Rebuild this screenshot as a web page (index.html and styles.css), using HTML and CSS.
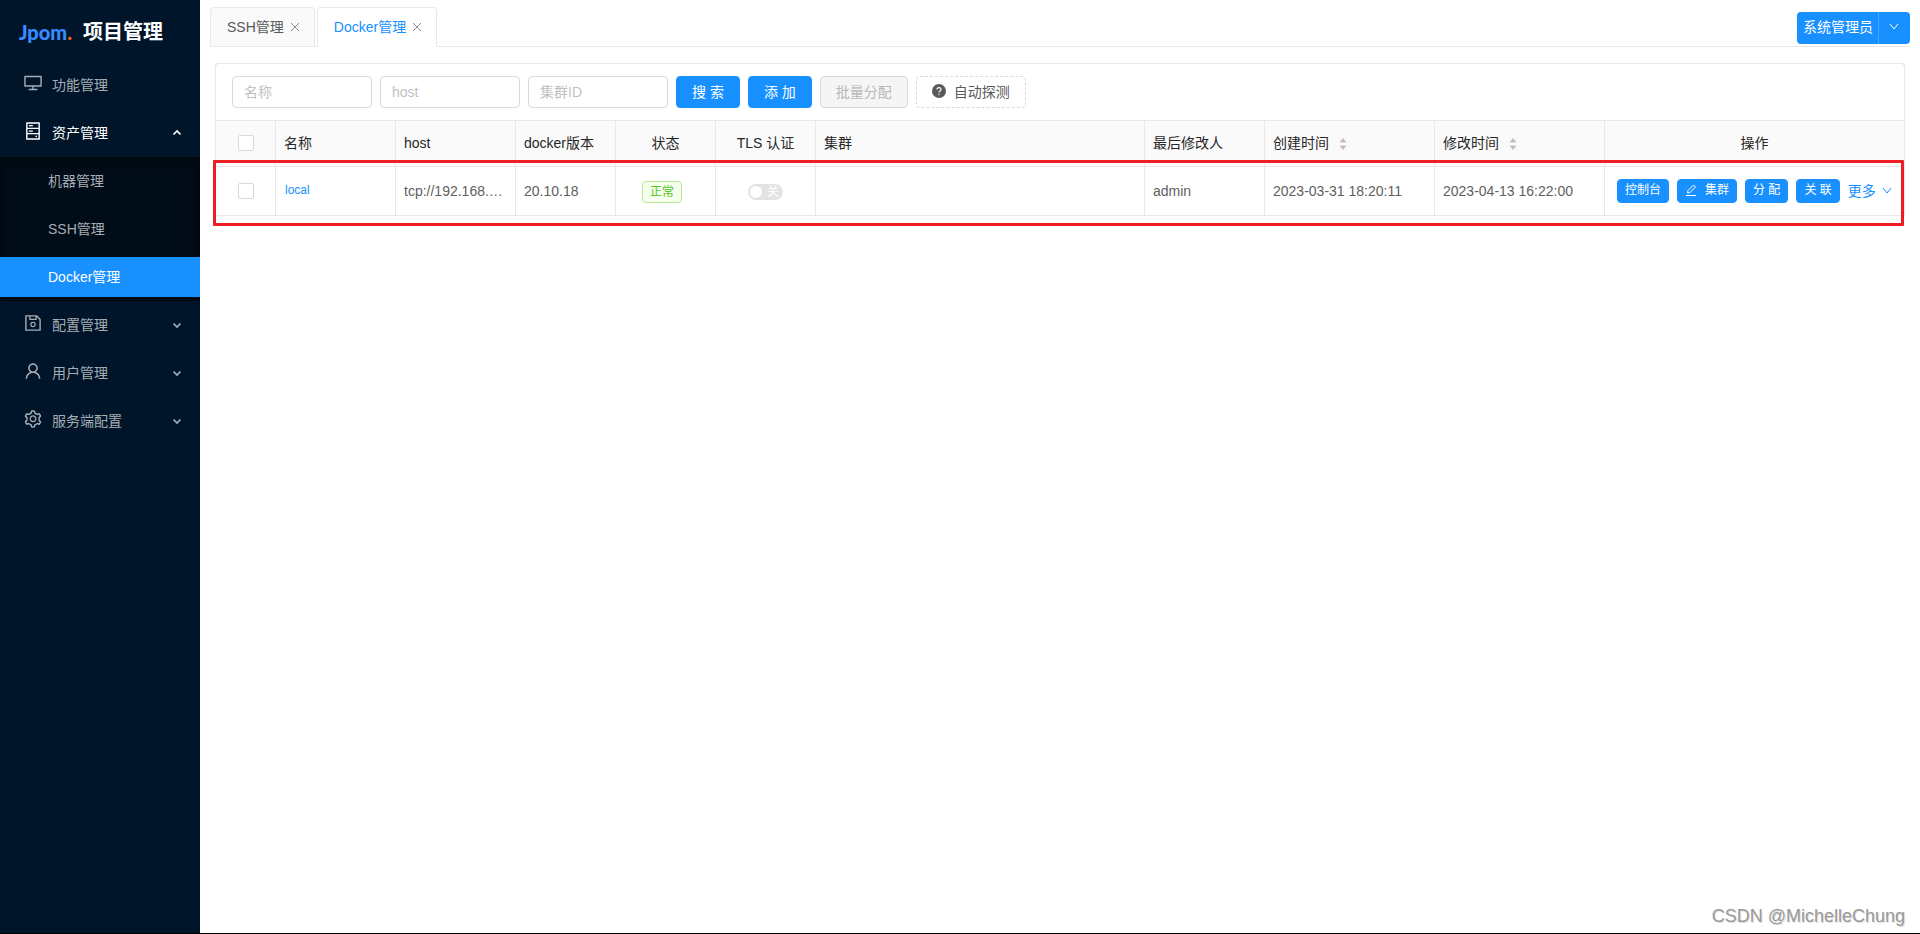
FILE: index.html
```html
<!DOCTYPE html>
<html lang="zh-CN">
<head>
<meta charset="utf-8">
<title>Jpom 项目管理</title>
<link rel="stylesheet" href="styles.css">
</head>
<body>
<svg class="sprite" aria-hidden="true">
  <symbol id="desktop" viewBox="0 0 1024 1024"><path d="M928 140H96c-17.700 0-32 14.300-32 32v496c0 17.700 14.300 32 32 32h380v112H304c-8.800 0-16 7.200-16 16v48c0 4.400 3.600 8 8 8h432c4.400 0 8-3.600 8-8v-48c0-8.800-7.200-16-16-16H548V700h380c17.700 0 32-14.300 32-32V172c0-17.700-14.300-32-32-32zm-40 488H136V212h752v416z"/></symbol>
  <symbol id="hdd" viewBox="0 0 1024 1024"><path d="M832 64H192c-17.700 0-32 14.300-32 32v832c0 17.700 14.300 32 32 32h640c17.700 0 32-14.300 32-32V96c0-17.700-14.300-32-32-32zm-600 72h560v208H232V136zm560 480H232V408h560v208zm0 272H232V680h560v208zM304 208h200v64H304zM304 480h200v64H304zM640 788a40 40 0 1 0 80 0 40 40 0 1 0-80 0z"/></symbol>
  <symbol id="save" viewBox="0 0 1024 1024"><path d="M893.300 293.300L730.700 130.700c-12-12-28.200-18.700-45.200-18.700H144c-17.700 0-32 14.300-32 32v736c0 17.700 14.300 32 32 32h736c17.700 0 32-14.300 32-32V338.500c0-17-6.700-33.200-18.700-45.200zM384 184h256v104H384V184zm456 656H184V184h136v136c0 17.700 14.300 32 32 32h320c17.700 0 32-14.300 32-32V205.800l136 136V840zM512 442c-79.500 0-144 64.500-144 144s64.500 144 144 144 144-64.500 144-144-64.500-144-144-144zm0 224c-44.200 0-80-35.800-80-80s35.800-80 80-80 80 35.800 80 80-35.800 80-80 80z"/></symbol>
  <symbol id="user" viewBox="0 0 1024 1024"><path d="M858.500 763.600a374 374 0 0 0-80.600-119.500 375.630 375.630 0 0 0-119.500-80.600c-.4-.2-.8-.3-1.200-.5C719.500 518 760 444.700 760 362c0-137-111-248-248-248S264 225 264 362c0 82.700 40.500 156 102.800 201.100-.4.2-.8.3-1.200.5-44.800 18.900-85 46-119.500 80.600a375.630 375.630 0 0 0-80.600 119.500A371.700 371.700 0 0 0 136 901.800a8 8 0 0 0 8 8.200h60c4.400 0 7.900-3.500 8-7.800 2-77.200 33-149.500 87.800-204.300 56.700-56.700 132-87.900 212.200-87.900s155.500 31.200 212.200 87.900C779 752.700 810 825 812 902.200c.1 4.400 3.600 7.800 8 7.800h60a8 8 0 0 0 8-8.200c-1-47.800-10.900-94.300-29.500-138.200zM512 534c-45.900 0-89.100-17.900-121.600-50.400S340 407.900 340 362c0-45.900 17.900-89.100 50.400-121.600S466.100 190 512 190s89.100 17.900 121.600 50.400S684 316.100 684 362c0 45.900-17.900 89.100-50.400 121.600S557.900 534 512 534z"/></symbol>
  <symbol id="setting" viewBox="0 0 1024 1024"><path d="M924.800 625.700l-65.500-56c3.100-19 4.700-38.400 4.700-57.800s-1.600-38.800-4.700-57.800l65.500-56a32.030 32.030 0 0 0 9.300-35.200l-.9-2.600a443.740 443.740 0 0 0-79.700-137.900l-1.800-2.100a32.120 32.120 0 0 0-35.100-9.500l-81.300 28.900c-30-24.600-63.500-44-99.700-57.600l-15.700-85a32.050 32.050 0 0 0-25.800-25.700l-2.700-.5c-52.100-9.400-106.900-9.400-159 0l-2.700.5a32.050 32.050 0 0 0-25.800 25.700l-15.800 85.400a351.860 351.860 0 0 0-99 57.400l-81.900-29.100a32 32 0 0 0-35.100 9.500l-1.800 2.100a446.020 446.020 0 0 0-79.700 137.900l-.9 2.600c-4.500 12.500-.8 26.500 9.300 35.200l66.300 56.600c-3.100 18.800-4.600 38-4.600 57.100 0 19.200 1.500 38.400 4.600 57.100L99 625.500a32.030 32.030 0 0 0-9.300 35.200l.9 2.600c18.100 50.400 44.900 96.900 79.700 137.900l1.800 2.100a32.120 32.120 0 0 0 35.100 9.500l81.900-29.100c29.800 24.500 63.100 43.900 99 57.400l15.800 85.400a32.050 32.050 0 0 0 25.800 25.700l2.700.5a449.400 449.400 0 0 0 159 0l2.700-.5a32.050 32.050 0 0 0 25.800-25.700l15.700-85a350 350 0 0 0 99.700-57.600l81.300 28.900a32 32 0 0 0 35.100-9.500l1.800-2.100c34.800-41.100 61.600-87.500 79.700-137.900l.9-2.600c4.500-12.300.8-26.300-9.300-35zM788.300 465.900c2.500 15.100 3.800 30.600 3.800 46.100s-1.300 31-3.800 46.100l-6.600 40.100 74.700 63.900a370.030 370.030 0 0 1-42.600 73.600L721 702.800l-31.400 25.800c-23.900 19.600-50.500 35-79.300 45.800l-38.100 14.300-17.900 97a377.500 377.500 0 0 1-85 0l-17.900-97.200-37.800-14.500c-28.500-10.800-55-26.200-78.700-45.700l-31.400-25.900-93.400 33.200c-17-22.900-31.200-47.600-42.600-73.600l75.500-64.500-6.500-40c-2.400-14.900-3.700-30.300-3.700-45.500 0-15.300 1.200-30.600 3.700-45.500l6.500-40-75.500-64.500c11.300-26.100 25.600-50.700 42.600-73.600l93.400 33.200 31.400-25.900c23.700-19.500 50.200-34.900 78.700-45.700l37.900-14.300 17.900-97.200c28.100-3.200 56.800-3.200 85 0l17.900 97 38.100 14.300c28.700 10.800 55.400 26.200 79.300 45.800l31.400 25.800 92.800-32.900c17 22.900 31.200 47.600 42.600 73.600L781.800 426l6.500 39.900zM512 326c-97.200 0-176 78.800-176 176s78.800 176 176 176 176-78.800 176-176-78.800-176-176-176zm79.200 255.200A111.600 111.600 0 0 1 512 614c-29.900 0-58-11.700-79.200-32.800A111.600 111.600 0 0 1 400 502c0-29.900 11.700-58 32.800-79.200C454 401.600 482.100 390 512 390c29.900 0 58 11.600 79.200 32.800A111.600 111.600 0 0 1 624 502c0 29.900-11.700 58-32.800 79.200z"/></symbol>
  <symbol id="close" viewBox="0 0 10 10"><path d="M1 1l8 8M9 1l-8 8" fill="none" stroke="currentColor"/></symbol>
  <symbol id="down" viewBox="0 0 10 10"><path d="M1 2l4 5 4-5" fill="none" stroke="currentColor"/></symbol>
  <symbol id="arrow" viewBox="0 0 10 10"><path d="M1.500 3.500L5 7l3.500-3.500" fill="none" stroke="currentColor" stroke-width="1.700"/></symbol>
  <symbol id="question" viewBox="0 0 14 14"><circle cx="7" cy="7" r="7"/><path d="M5 5.500c0-2.600 4-2.600 4 0C9 7 7 6.800 7 8.500M7 9.700v1.300" fill="none" stroke="#fff" stroke-width="1.200"/></symbol>
  <symbol id="edit" viewBox="0 0 12 12"><path d="M1 11.500h10M2.500 9l.5-2.500L8.500 1l2 2L5 8.500z" fill="none" stroke="currentColor"/></symbol>
  <symbol id="sorter" viewBox="0 0 8 14"><path d="M0.500 5.500L4 1l3.500 4.500zM0.500 8.500h7L4 13z"/></symbol>
</svg>

<div class="layout">
  <aside class="sider">
    <div class="brand">
      <span class="logo">Jpom<span class="logo-dot">.</span></span>
      <h1 class="brand-title">项目管理</h1>
    </div>
    <nav class="menu">
      <a class="menu-item" href="#"><svg class="menu-icon"><use href="#desktop"/></svg>功能管理</a>
      <a class="menu-item open" href="#"><svg class="menu-icon"><use href="#hdd"/></svg>资产管理<svg class="menu-arrow"><use href="#arrow"/></svg></a>
      <div class="submenu">
        <a class="menu-item" href="#">机器管理</a>
        <a class="menu-item" href="#">SSH管理</a>
        <a class="menu-item selected" href="#">Docker管理</a>
      </div>
      <a class="menu-item" href="#"><svg class="menu-icon"><use href="#save"/></svg>配置管理<svg class="menu-arrow"><use href="#arrow"/></svg></a>
      <a class="menu-item" href="#"><svg class="menu-icon"><use href="#user"/></svg>用户管理<svg class="menu-arrow"><use href="#arrow"/></svg></a>
      <a class="menu-item" href="#"><svg class="menu-icon"><use href="#setting"/></svg>服务端配置<svg class="menu-arrow"><use href="#arrow"/></svg></a>
    </nav>
  </aside>

  <div class="page">
    <header class="topbar">
      <div class="tabs" role="tablist">
        <button class="tab" role="tab">SSH管理<svg class="tab-close"><use href="#close"/></svg></button>
        <button class="tab active" role="tab" aria-selected="true">Docker管理<svg class="tab-close"><use href="#close"/></svg></button>
      </div>
      <div class="account">
        <button class="btn primary account-name">系统管理员</button>
        <button class="btn primary account-more" aria-label="展开"><svg class="chevron"><use href="#down"/></svg></button>
      </div>
    </header>

    <main class="card">
      <form class="filters">
        <input class="field" type="text" placeholder="名称" aria-label="名称">
        <input class="field" type="text" placeholder="host" aria-label="host">
        <input class="field" type="text" placeholder="集群ID" aria-label="集群ID">
        <button class="btn primary" type="button">搜 索</button>
        <button class="btn primary" type="button">添 加</button>
        <button class="btn" type="button" disabled>批量分配</button>
        <button class="btn dashed" type="button"><svg class="question"><use href="#question"/></svg>自动探测</button>
      </form>
      <div class="table-wrap">
        <table class="table">
          <colgroup>
            <col class="w60"><col class="w120"><col class="w120"><col class="w100"><col class="w100"><col class="w100"><col><col class="w120"><col class="w170"><col class="w170"><col class="w-actions">
          </colgroup>
          <thead>
            <tr>
              <th class="center"><input class="check" type="checkbox" aria-label="全选"></th>
              <th>名称</th>
              <th>host</th>
              <th>docker版本</th>
              <th class="center">状态</th>
              <th class="center">TLS 认证</th>
              <th>集群</th>
              <th>最后修改人</th>
              <th>创建时间<svg class="sorter"><use href="#sorter"/></svg></th>
              <th>修改时间<svg class="sorter"><use href="#sorter"/></svg></th>
              <th class="center">操作</th>
            </tr>
          </thead>
          <tbody>
            <tr>
              <td class="center"><input class="check" type="checkbox" aria-label="选择 local"></td>
              <td><a class="name-link" href="#">local</a></td>
              <td>tcp://192.168.…</td>
              <td>20.10.18</td>
              <td class="center"><span class="tag">正常</span></td>
              <td class="center"><button class="switch" role="switch" aria-checked="false" disabled><span class="knob"></span>关</button></td>
              <td></td>
              <td>admin</td>
              <td>2023-03-31 18:20:11</td>
              <td>2023-04-13 16:22:00</td>
              <td>
                <div class="actions">
                  <button class="btn primary small">控制台</button>
                  <button class="btn primary small"><svg class="edit"><use href="#edit"/></svg>集群</button>
                  <button class="btn primary small">分 配</button>
                  <button class="btn primary small">关 联</button>
                  <a class="more" href="#">更多<svg class="chevron"><use href="#down"/></svg></a>
                </div>
              </td>
            </tr>
          </tbody>
        </table>
        <div class="highlight"></div>
      </div>
    </main>
    <footer class="watermark">CSDN @MichelleChung</footer>
  </div>
</div>
</body>
</html>
```

FILE: styles.css
```css
* {
  box-sizing: border-box;
}

body {
  margin: 0;
  font: 14px/22px "Liberation Sans", "Noto Sans CJK SC", sans-serif;
  color: #606060;
  background: #fff;
}

a {
  color: #1890ff;
  text-decoration: none;
}

button,
input {
  font: inherit;
}

svg {
  fill: currentColor;
  flex: none;
}

.sprite {
  position: absolute;
  width: 0;
  height: 0;
}

.layout {
  display: flex;
  min-height: 100vh;
  border-bottom: 1px solid #000;
}

/* Sidebar */
.sider {
  flex: 0 0 200px;
  background: #001529;
}

.brand {
  display: flex;
  align-items: center;
  gap: 11px;
  height: 61px;
  padding: 2px 0 0 19px;
}

.logo {
  font: 900 20px/30px Lato, "Liberation Sans", sans-serif;
  color: #3a8bff;
}

.logo-dot {
  color: #ff5a1f;
}

.brand-title {
  margin: 0;
  font-size: 20px;
  line-height: 30px;
  font-weight: 700;
  color: #fff;
}

.menu,
.submenu {
  display: flex;
  flex-direction: column;
}

.menu-item {
  display: flex;
  align-items: center;
  height: 40px;
  margin: 4px 0;
  padding: 0 18px 0 23px;
  color: #a6adb4;
}

.menu-item.open {
  color: #fff;
}

.menu-icon {
  width: 20px;
  height: 20px;
  margin: 0 9px 4px 0;
}

.menu-arrow {
  width: 10px;
  height: 10px;
  margin-left: auto;
}

.open .menu-arrow {
  transform: rotate(180deg);
}

.submenu {
  background: #000c17;
  box-shadow: inset 0 2px 8px #00000073;
}

.submenu .menu-item {
  padding-left: 48px;
}

.menu-item.selected {
  color: #fff;
  background: #1890ff;
}

/* Top bar */
.page {
  flex: 1;
  min-width: 0;
  display: flex;
  flex-direction: column;
}

.topbar {
  display: flex;
  justify-content: space-between;
  align-items: flex-end;
  height: 47px;
  margin: 0 10px;
  border-bottom: 1px solid #e8e8e8;
}

.tabs {
  display: flex;
  gap: 2px;
  margin-bottom: -1px;
}

.tab {
  display: flex;
  align-items: center;
  gap: 6px;
  height: 40px;
  padding: 0 14px 0 16px;
  border: 1px solid #e8e8e8;
  border-radius: 4px 4px 0 0;
  background: #fafafa;
  color: #595959;
}

.tab.active {
  border-bottom-color: #fff;
  background: #fff;
  color: #1890ff;
}

.tab-close {
  width: 10px;
  height: 10px;
  color: #8c8c8c;
}

.account {
  display: flex;
  margin-bottom: 2px;
}

/* Buttons */
.btn {
  display: flex;
  align-items: center;
  justify-content: center;
  height: 32px;
  padding: 0 15px;
  border: 1px solid #d9d9d9;
  border-radius: 4px;
  background: #fff;
  color: #595959;
  white-space: nowrap;
}

.btn:disabled {
  background: #f5f5f5;
  color: #b8b8b8;
}

.btn.primary {
  border-color: #1890ff;
  background: #1890ff;
  color: #fff;
}

.btn.dashed {
  border-style: dashed;
}

.btn.small {
  height: 24px;
  padding: 0 7px 2px;
  font-size: 12px;
}

.btn.account-name {
  padding: 0 5px 2px;
  border-right-color: #40a9ff;
  border-radius: 4px 0 0 4px;
}

.btn.account-more {
  padding: 0 10px 2px;
  border-left: 0;
  border-radius: 0 4px 4px 0;
}

.chevron {
  width: 10px;
  height: 10px;
}

.question {
  width: 14px;
  height: 14px;
  margin: 0 8px 2px 0;
}

.edit {
  width: 12px;
  height: 12px;
  margin-right: 8px;
}

/* Card */
.card {
  margin: 16px 15px 0;
  border: 1px solid #e8e8e8;
  border-bottom: 0;
  border-radius: 4px 4px 0 0;
}

.filters {
  display: flex;
  gap: 8px;
  padding: 12px 16px;
  border-bottom: 1px solid #e8e8e8;
}

.field {
  width: 140px;
  height: 32px;
  padding: 4px 11px;
  border: 1px solid #d9d9d9;
  border-radius: 4px;
  outline: 0;
  color: #595959;
}

.field::placeholder {
  color: #bfbfbf;
}

/* Table */
.table-wrap {
  position: relative;
}

.table {
  width: 100%;
  table-layout: fixed;
  border-collapse: separate;
  border-spacing: 0;
}

.w60 { width: 60px; }
.w100 { width: 100px; }
.w120 { width: 120px; }
.w170 { width: 170px; }
.w-actions { width: 299px; }

.table th,
.table td {
  padding: 0 8px;
  border-right: 1px solid #e8e8e8;
  border-bottom: 1px solid #e8e8e8;
  text-align: left;
  white-space: nowrap;
}

.table th:last-child,
.table td:last-child {
  border-right: 0;
}

.table th {
  height: 46px;
  padding-bottom: 2px;
  background: #fafafa;
  color: #262626;
  font-weight: 400;
}

.table td {
  height: 49px;
}

.table .center {
  text-align: center;
}

.check {
  appearance: none;
  display: block;
  width: 16px;
  height: 16px;
  margin: 0 auto;
  border: 1px solid #d9d9d9;
  border-radius: 2px;
  background: #fff;
}

.name-link {
  display: block;
  padding: 0 0 2px 1px;
  font-size: 12px;
}

.tag {
  display: inline-block;
  margin-right: 7px;
  padding: 0 7px;
  border: 1px solid #b7eb8f;
  border-radius: 4px;
  background: #f6ffed;
  color: #52c41a;
  font-size: 12px;
  line-height: 20px;
}

.switch {
  display: flex;
  align-items: center;
  justify-content: space-between;
  width: 35px;
  height: 16px;
  margin: 2px auto 0;
  padding: 0 4px 0 2px;
  border: 0;
  border-radius: 8px;
  background: #e3e3e3;
  color: #fff;
  font-size: 12px;
  line-height: 16px;
}

.knob {
  width: 12px;
  height: 12px;
  border-radius: 50%;
  background: #fff;
}

.sorter {
  width: 8px;
  height: 14px;
  margin-left: 10px;
  vertical-align: -3px;
  color: #bfbfbf;
}

.actions {
  display: flex;
  align-items: center;
  gap: 8px;
  padding-left: 4px;
}

.more {
  display: flex;
  align-items: center;
  gap: 6px;
}

.highlight {
  position: absolute;
  inset: 39px 0 -10px -3px;
  border: 3px solid #ee1c25;
  border-radius: 1px;
  pointer-events: none;
}

.watermark {
  margin-top: auto;
  padding: 0 15px 5px;
  text-align: right;
  font-size: 18px;
  line-height: 24px;
  color: #999;
  text-shadow: 1px 1px 0 #e0e0e0;
}
```
